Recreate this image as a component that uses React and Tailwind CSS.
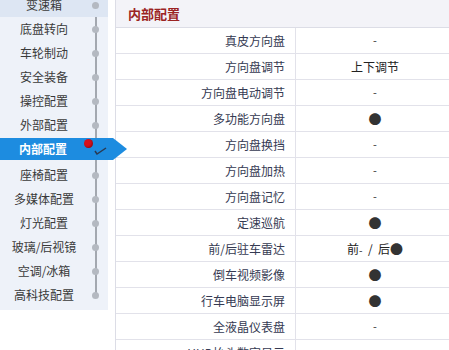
import React from 'react';

const menu = ['变速箱', '底盘转向', '车轮制动', '安全装备', '操控配置', '外部配置', '内部配置', '座椅配置', '多媒体配置', '灯光配置', '玻璃/后视镜', '空调/冰箱', '高科技配置'];

const rows = [
  ['真皮方向盘', '-'],
  ['方向盘调节', '上下调节'],
  ['方向盘电动调节', '-'],
  ['多功能方向盘', 'dot'],
  ['方向盘换挡', '-'],
  ['方向盘加热', '-'],
  ['方向盘记忆', '-'],
  ['定速巡航', 'dot'],
  ['前/后驻车雷达', 'radar'],
  ['倒车视频影像', 'dot'],
  ['行车电脑显示屏', 'dot'],
  ['全液晶仪表盘', '-'],
  ['HUD抬头数字显示', '-'],
];

function Value({ v }) {
  if (v === 'dot') return <span className="text-[13px] leading-none text-[#333]">●</span>;
  if (v === '-') return <span className="text-[11px] text-[#333]">-</span>;
  if (v === 'radar')
    return (
      <span className="text-[12px] text-[#222] whitespace-pre">
        前<span className="text-[10px]">-</span>{'  /  '}后<span className="text-[13px] text-[#333]">●</span>
      </span>
    );
  return <span className="text-[12px] text-[#222]">{v}</span>;
}

export default function App() {
  return (
    <div className="w-[449px] h-[350px] overflow-hidden bg-white flex" style={{ fontFamily: '"Noto Sans CJK SC", "Noto Sans", sans-serif' }}>
      {/* SIDEBAR */}
      <div className="w-[115px] shrink-0">
        <div className="relative w-[108px] bg-[#eef2f9] -mt-[7px] pb-[3px]">
          <div className="absolute left-[95px] top-[7px] bottom-[14px] w-[2px] bg-[#a3a8b0]"></div>
          {menu.map((m, i) =>
            m === '内部配置' ? (
              <div key={m} className="relative z-10 h-[24px] mb-[2px] flex items-center">
                <div className="relative shrink-0 w-[113px] h-[22px] bg-[#1d8ce0] flex items-center">
                  <span className="w-[86px] text-center text-[12px] font-bold text-white">{m}</span>
                  <span className="absolute left-[84px] top-[1px] w-[9px] h-[9px] rounded-full bg-[#d8101c] shadow-[inset_-1px_-1px_2px_rgba(0,0,0,0.3)]"></span>
                  <svg className="absolute left-[92px] top-[6px]" width="18" height="12" viewBox="0 0 18 12">
                    <path d="M3 7 L5 10 L14 4" stroke="#2b3a52" strokeWidth="1.5" fill="none" />
                  </svg>
                  <div className="absolute left-[113px] top-0 w-0 h-0 border-y-[11px] border-y-transparent border-l-[14px] border-l-[#1d8ce0]"></div>
                </div>
              </div>
            ) : (
              <div key={m} className={`relative h-[24px] flex items-center ${i === 0 ? 'bg-[#dde6f3]' : ''}`}>
                <span className="w-[88px] text-center text-[12px] text-[#3a3a3a]">{m}</span>
                <span className="absolute left-[92px] top-[9px] w-[7px] h-[7px] rounded-full bg-[#b4b9c1]"></span>
              </div>
            )
          )}
        </div>
      </div>

      {/* TABLE */}
      <div className="flex-1 border-l border-[#dcdde6]">
        <div className="h-[28px] bg-[#f3f3f8] border-b border-[#dcdde6] flex items-center pl-[12px]">
          <span className="text-[13px] font-bold text-[#9b2323]">内部配置</span>
        </div>
        {rows.map(([label, v]) => (
          <div key={label} className="h-[26px] border-b border-[#e2e2ea] flex">
            <div className="w-[180px] shrink-0 flex items-center justify-end pr-[10px] text-[12px] text-[#353a52] border-r border-[#e2e2ea]">
              {label}
            </div>
            <div className="w-[158px] shrink-0 flex items-center justify-center">
              <Value v={v} />
            </div>
          </div>
        ))}
      </div>
    </div>
  );
}
